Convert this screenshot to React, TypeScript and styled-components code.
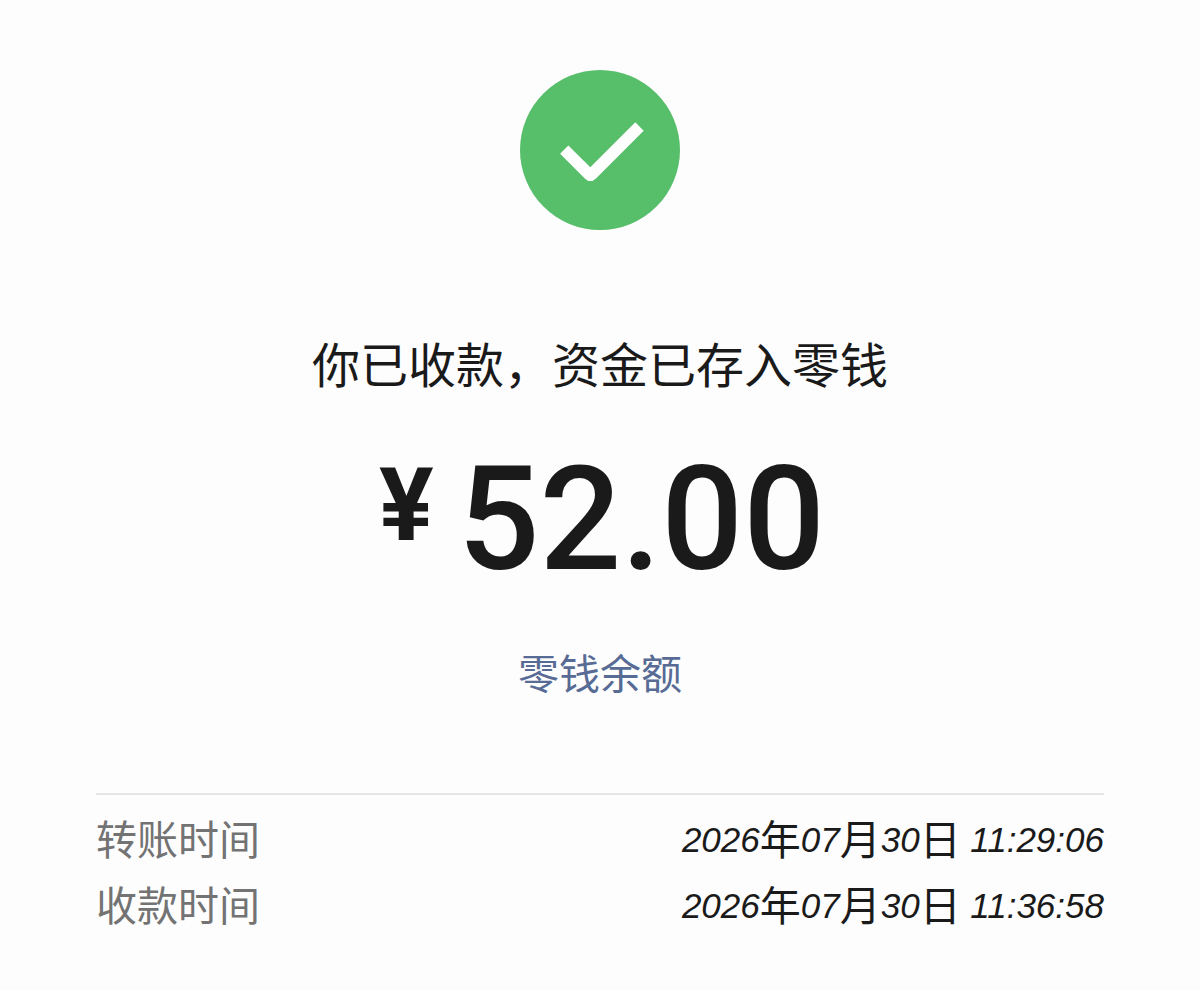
import React from "react";
import styled, { createGlobalStyle } from "styled-components";

const GlobalStyle = createGlobalStyle`
  *, *::before, *::after { box-sizing: border-box; }
  body {
    margin: 0;
    background: #fdfdfd;
    color: #1a1a1a;
    font-family: "Noto Sans CJK SC", sans-serif;
  }
`;

const Page = styled.main`
  display: flex;
  flex-direction: column;
  align-items: center;
  padding: 70px 8% 52px;
`;

const StatusIcon = styled.svg`
  display: block;
  width: 160px;
  height: 160px;
`;

const Title = styled.h1`
  margin: 96px 0 0;
  font-size: 48px;
  font-weight: 400;
  line-height: 72px;
  text-align: center;
`;

const Amount = styled.p`
  display: flex;
  align-items: flex-start;
  gap: 24px;
  margin: 50px 0 0;
  font-family: Roboto, sans-serif;
  font-size: 144px;
  font-weight: 500;
  line-height: 144px;
`;

const Currency = styled.span`
  padding: 6px 0 0 4px;
  font-size: 102px;
  font-weight: 700;
  line-height: 102px;
`;

const BalanceLink = styled.a`
  margin-top: 49px;
  color: #576b95;
  font-size: 41px;
  line-height: 60px;
  text-decoration: none;
`;

const Details = styled.dl`
  width: 100%;
  margin: 92px 0 0;
  padding-top: 9px;
  border-top: 2px solid #e5e5e5;
`;

const DetailRow = styled.div`
  display: flex;
  justify-content: space-between;
  font-size: 41px;
  line-height: 66px;
`;

const Label = styled.dt`
  color: #737373;
`;

const Value = styled.dd`
  display: flex;
  align-items: center;
  margin: 0;
`;

const Digits = styled.span`
  padding-top: 5px;
  font-family: "Liberation Sans", sans-serif;
  font-size: 35px;
  font-style: italic;
  line-height: 40px;
  white-space: pre;
`;

const records = [
  { label: "转账时间", year: "2026", month: "07", day: "30", time: "11:29:06" },
  { label: "收款时间", year: "2026", month: "07", day: "30", time: "11:36:58" },
];

export default function App() {
  return (
    <>
      <GlobalStyle />
      <Page>
        <StatusIcon viewBox="0 0 160 160" role="img" aria-label="收款成功">
          <circle cx="80" cy="80" r="80" fill="#57be6a" />
          <path
            d="M48.4 75.4 L70.3 97.3 L115.3 52.3 L123.7 60.7 L76 108.4 Q70.3 113.8 64.8 108.4 L40.1 83.7 Z"
            fill="#fff"
          />
        </StatusIcon>
        <Title>你已收款，资金已存入零钱</Title>
        <Amount>
          <Currency>¥</Currency>
          <span>52.00</span>
        </Amount>
        <BalanceLink href="#balance">零钱余额</BalanceLink>
        <Details>
          {records.map((r) => (
            <DetailRow key={r.label}>
              <Label>{r.label}</Label>
              <Value>
                <Digits>{r.year}</Digits>年<Digits>{r.month}</Digits>月
                <Digits>{r.day}</Digits>日<Digits>{" " + r.time}</Digits>
              </Value>
            </DetailRow>
          ))}
        </Details>
      </Page>
    </>
  );
}
